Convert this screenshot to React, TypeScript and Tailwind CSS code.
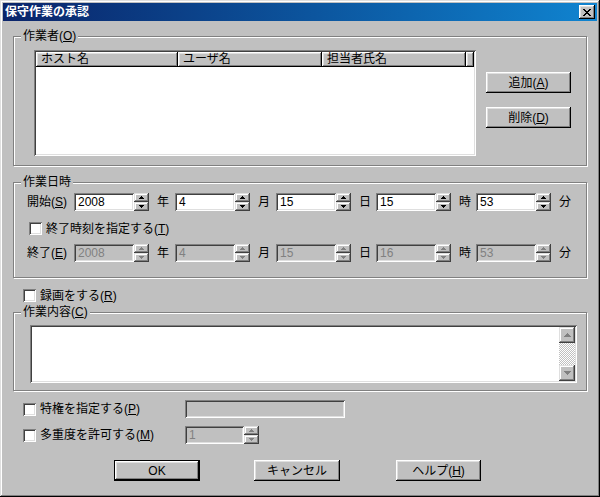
import React from "react";

const raised =
  "shadow-[inset_-1px_-1px_#000000,inset_1px_1px_#ffffff,inset_-2px_-2px_#808080,inset_2px_2px_#dfdfdf]";
const raisedSoft =
  "shadow-[inset_-1px_-1px_#404040,inset_1px_1px_#dfdfdf,inset_-2px_-2px_#808080,inset_2px_2px_#ffffff]";
const sunken =
  "shadow-[inset_1px_1px_#808080,inset_-1px_-1px_#ffffff,inset_2px_2px_#404040,inset_-2px_-2px_#dfdfdf]";
const etched =
  "border border-[#808080] shadow-[1px_1px_0_#ffffff,inset_1px_1px_0_#ffffff]";

function Group({
  label,
  className,
  children,
}: {
  label: React.ReactNode;
  className: string;
  children?: React.ReactNode;
}) {
  return (
    <div className={`relative ${etched} ${className}`}>
      <span className="absolute left-[7px] top-[-8px] bg-[#c0c0c0] px-[2px] leading-[14px] whitespace-nowrap">
        {label}
      </span>
      {children}
    </div>
  );
}

function Mn({ t, k }: { t: string; k: string }) {
  return (
    <span className="whitespace-nowrap">
      {t}(<u>{k}</u>)
    </span>
  );
}

function Arrow({ up, disabled }: { up: boolean; disabled?: boolean }) {
  const color = disabled ? "#808080" : "#000000";
  return (
    <svg width="5" height="3" viewBox="0 0 5 3" shapeRendering="crispEdges">
      {up ? (
        <>
          <rect x="2" y="0" width="1" height="1" fill={color} />
          <rect x="1" y="1" width="3" height="1" fill={color} />
          <rect x="0" y="2" width="5" height="1" fill={color} />
        </>
      ) : (
        <>
          <rect x="0" y="0" width="5" height="1" fill={color} />
          <rect x="1" y="1" width="3" height="1" fill={color} />
          <rect x="2" y="2" width="1" height="1" fill={color} />
        </>
      )}
    </svg>
  );
}

function Spin({ disabled }: { disabled?: boolean }) {
  return (
    <div className="flex flex-col w-[15px] h-[18px] shrink-0">
      <div className={`h-[9px] bg-[#c0c0c0] ${raisedSoft} flex items-center justify-center`}>
        <Arrow up disabled={disabled} />
      </div>
      <div className={`h-[9px] bg-[#c0c0c0] ${raisedSoft} flex items-center justify-center`}>
        <Arrow up={false} disabled={disabled} />
      </div>
    </div>
  );
}

function Field({
  value,
  className,
  disabled,
}: {
  value?: string;
  className: string;
  disabled?: boolean;
}) {
  return (
    <div
      className={`${className} h-[18px] shrink-0 ${sunken} ${
        disabled ? "bg-[#c0c0c0] text-[#808080]" : "bg-white text-black"
      } pl-[4px] leading-[18px]`}
    >
      {value}
    </div>
  );
}

function Check() {
  return <div className={`w-[13px] h-[13px] shrink-0 bg-white ${sunken}`} />;
}

function Button({
  children,
  className,
  isDefault,
}: {
  children: React.ReactNode;
  className: string;
  isDefault?: boolean;
}) {
  if (isDefault) {
    return (
      <div className={`${className} h-[21px] border border-black bg-[#c0c0c0] flex`}>
        <div className={`flex-1 ${raised} flex items-center justify-center`}>{children}</div>
      </div>
    );
  }
  return (
    <div className={`${className} h-[21px] bg-[#c0c0c0] ${raised} flex items-center justify-center`}>
      {children}
    </div>
  );
}

function HeaderCell({ children, className }: { children?: React.ReactNode; className: string }) {
  return (
    <div
      className={`${className} h-[15px] bg-[#c0c0c0] ${raised} pl-[5px] leading-[15px] whitespace-nowrap overflow-hidden`}
    >
      {children}
    </div>
  );
}

function DateRow({
  label,
  values,
  disabled,
}: {
  label: React.ReactNode;
  values: string[];
  disabled?: boolean;
}) {
  const units = ["年", "月", "日", "時", "分"];
  const unitW = ["w-[26px]", "w-[26px]", "w-[25px]", "w-[25px]", "w-[25px]"];
  return (
    <div className="flex items-center h-[18px]">
      <div className="w-[47px] shrink-0">{label}</div>
      {values.map((v, i) => (
        <React.Fragment key={i}>
          <Field value={v} className="w-[60px]" disabled={disabled} />
          <Spin disabled={disabled} />
          <div className={`${unitW[i]} shrink-0 pl-[8px]`}>{units[i]}</div>
        </React.Fragment>
      ))}
    </div>
  );
}

export default function App() {
  return (
    <div className="w-[600px] h-[497px] bg-[#c0c0c0] p-[3px] flex flex-col text-[12px] leading-[14px] text-black font-[family-name:'Liberation_Sans','Noto_Sans_CJK_JP',sans-serif] shadow-[inset_-1px_-1px_#000000,inset_1px_1px_#dfdfdf,inset_-2px_-2px_#808080,inset_2px_2px_#ffffff]">
      {/* Title bar */}
      <div className="h-[18px] shrink-0 flex items-center bg-linear-to-r from-[#0a246a] to-[#1084d0] pl-[2px] pr-[2px]">
        <span className="text-white font-bold text-[12px] leading-[18px] flex-1">保守作業の承認</span>
        <div className={`w-[16px] h-[14px] bg-[#c0c0c0] ${raised} flex items-center justify-center`}>
          <svg width="8" height="7" viewBox="0 0 8 7" shapeRendering="crispEdges">
            <path
              d="M0 0h2v1h1v1h2v-1h1v-1h2v1h-1v1h-1v1h-1v1h1v1h1v1h1v1h-2v-1h-1v-1h-2v1h-1v1h-2v-1h1v-1h1v-1h1v-1h-1v-1h-1v-1h-1z"
              fill="#000"
            />
          </svg>
        </div>
      </div>

      {/* Body */}
      <div className="flex flex-col pl-[10px]">
        {/* 作業者 */}
        <Group label={<Mn t="作業者" k="O" />} className="mt-[15px] w-[574px] h-[130px] flex pl-[20px] pt-[13px]">
          <div className={`w-[442px] h-[106px] bg-white ${sunken} p-[2px] flex flex-col`}>
            <div className="flex">
              <HeaderCell className="w-[142px]">ホスト名</HeaderCell>
              <HeaderCell className="w-[144px]">ユーザ名</HeaderCell>
              <HeaderCell className="w-[144px]">担当者氏名</HeaderCell>
              <HeaderCell className="flex-1" />
            </div>
          </div>
          <div className="ml-[10px] mt-[22px] flex flex-col gap-[14px]">
            <Button className="w-[85px]">
              <Mn t="追加" k="A" />
            </Button>
            <Button className="w-[85px]">
              <Mn t="削除" k="D" />
            </Button>
          </div>
        </Group>

        {/* 作業日時 */}
        <Group label="作業日時" className="mt-[16px] w-[574px] h-[96px] flex flex-col pl-[13px] pt-[10px]">
          <DateRow label={<Mn t="開始" k="S" />} values={["2008", "4", "15", "15", "53"]} />
          <div className="mt-[9px] h-[17px] flex items-center ml-[2px]">
            <Check />
            <span className="ml-[4px]">
              <Mn t="終了時刻を指定する" k="T" />
            </span>
          </div>
          <div className="mt-[7px]">
            <DateRow label={<Mn t="終了" k="E" />} values={["2008", "4", "15", "16", "53"]} disabled />
          </div>
        </Group>

        {/* 録画 */}
        <div className="mt-[9px] h-[17px] flex items-center ml-[10px]">
          <Check />
          <span className="ml-[4px]">
            <Mn t="録画をする" k="R" />
          </span>
        </div>

        {/* 作業内容 */}
        <Group label={<Mn t="作業内容" k="C" />} className="mt-[8px] w-[574px] h-[79px] pl-[16px] pt-[12px]">
          <div className={`w-[547px] h-[58px] bg-white ${sunken} p-[2px] flex justify-end`}>
            <div className="w-[16px] flex flex-col">
              <div className={`h-[16px] bg-[#c0c0c0] ${raisedSoft} flex items-center justify-center`}>
                <svg width="7" height="4" viewBox="0 0 7 4" shapeRendering="crispEdges">
                  <path d="M3 0h1v1h1v1h1v1h1v1h-7v-1h1v-1h1v-1h1z" fill="#808080" />
                </svg>
              </div>
              <div className="flex-1 bg-[repeating-conic-gradient(#c0c0c0_0%_25%,#ffffff_0%_50%)] bg-[length:2px_2px]" />
              <div className={`h-[16px] bg-[#c0c0c0] ${raisedSoft} flex items-center justify-center`}>
                <svg width="7" height="4" viewBox="0 0 7 4" shapeRendering="crispEdges">
                  <path d="M0 0h7v1h-1v1h-1v1h-1v1h-1v-1h-1v-1h-1v-1h-1z" fill="#808080" />
                </svg>
              </div>
            </div>
          </div>
        </Group>

        {/* 特権 */}
        <div className="mt-[9px] h-[18px] flex items-center ml-[10px]">
          <div className="w-[162px] flex items-center shrink-0">
            <Check />
            <span className="ml-[4px]">
              <Mn t="特権を指定する" k="P" />
            </span>
          </div>
          <Field className="w-[160px]" disabled />
        </div>

        {/* 多重度 */}
        <div className="mt-[8px] h-[18px] flex items-center ml-[10px]">
          <div className="w-[162px] flex items-center shrink-0">
            <Check />
            <span className="ml-[4px]">
              <Mn t="多重度を許可する" k="M" />
            </span>
          </div>
          <Field className="w-[59px]" value="1" disabled />
          <Spin disabled />
        </div>

        {/* Buttons */}
        <div className="mt-[16px] flex ml-[101px]">
          <Button className="w-[86px]" isDefault>
            OK
          </Button>
          <Button className="w-[86px] ml-[54px]">キャンセル</Button>
          <Button className="w-[85px] ml-[56px]">
            <Mn t="ヘルプ" k="H" />
          </Button>
        </div>
      </div>
    </div>
  );
}
